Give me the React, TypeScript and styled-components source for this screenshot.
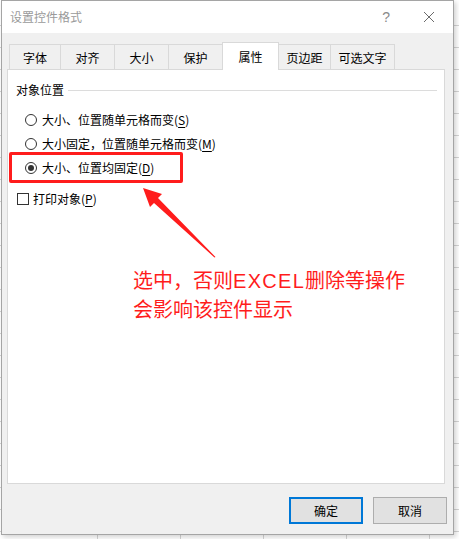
import styled, { createGlobalStyle } from "styled-components";

const GlobalStyle = createGlobalStyle`
  html, body {
    margin: 0;
    padding: 0;
    width: 459px;
    height: 539px;
    overflow: hidden;
  }
  body {
    font-family: "Noto Sans CJK SC", "Noto Sans", sans-serif;
    font-size: 12px;
    color: #000;
  }
`;

const tabs = [
  { label: "字体", width: 52 },
  { label: "对齐", width: 55 },
  { label: "大小", width: 55 },
  { label: "保护", width: 55 },
  { label: "属性", width: 57 },
  { label: "页边距", width: 53 },
  { label: "可选文字", width: 65 },
];

const radios = [
  { text: "大小、位置随单元格而变", key: "S", checked: false },
  { text: "大小固定，位置随单元格而变", key: "M", checked: false },
  { text: "大小、位置均固定", key: "D", checked: true },
];

const App = () => {
  return (
    <Page>
      <GlobalStyle />
      <Dialog>
        <TitleBar>
          <Title>设置控件格式</Title>
          <TitleButtons>
            <Help>?</Help>
            <CloseIcon width="12" height="12" viewBox="0 0 12 12">
              <path d="M1 1 L11 11 M11 1 L1 11" stroke="#6b6b6b" strokeWidth="1" fill="none" />
            </CloseIcon>
          </TitleButtons>
        </TitleBar>
        <Body>
          <TabRow>
            {tabs.map((t) => (
              <Tab key={t.label} $active={t.label === "属性"} style={{ width: t.width }}>
                {t.label}
              </Tab>
            ))}
          </TabRow>
          <Panel>
            <SectionHeader>
              <span>对象位置</span>
              <Rule />
            </SectionHeader>
            <RadioGroup>
              {radios.map((r) => (
                <OptionRow key={r.key}>
                  <RadioCircle $checked={r.checked} />
                  <span>
                    {r.text}(<u>{r.key}</u>)
                  </span>
                </OptionRow>
              ))}
            </RadioGroup>
            <CheckRow>
              <CheckBox />
              <span>
                打印对象(<u>P</u>)
              </span>
            </CheckRow>
          </Panel>
          <Footer>
            <Button $primary>确定</Button>
            <Button>取消</Button>
          </Footer>
        </Body>
      </Dialog>

      <Highlight />
      <ArrowLayer width="459" height="539" viewBox="0 0 459 539">
        <polygon
          points="143,188 162,194 158,198 215.5,257 214.5,257.5 154,203 150,207"
          fill="#ff1c1c"
        />
      </ArrowLayer>
      <Note>
        选中，否则<Latin>EXCEL</Latin>删除等操作
        <br />
        会影响该控件显示
      </Note>
    </Page>
  );
};

export default App;

const Page = styled.div`
  position: relative;
  width: 459px;
  height: 539px;
  background-color: #fff;
  background-image:
    repeating-linear-gradient(to bottom, transparent 0, transparent 21px, #d4d4d4 21px, #d4d4d4 22px),
    repeating-linear-gradient(to right, transparent 0, transparent 82px, #d4d4d4 82px, #d4d4d4 83px);
  background-position: 0 4px, 15px 0;
  overflow: hidden;
`;

const Dialog = styled.div`
  margin-left: 1px;
  width: 453px;
  height: 535px;
  box-sizing: border-box;
  border: 1px solid #a5a5a5;
  background: #f0f0f0;
  display: flex;
  flex-direction: column;
  box-shadow: 2px 2px 5px rgba(0, 0, 0, 0.18);
`;

const TitleBar = styled.div`
  height: 32px;
  flex: none;
  background: #fff;
  display: flex;
  align-items: center;
  justify-content: space-between;
  padding: 0 18px 0 8px;
`;

const Title = styled.div`
  color: #9a9a9a;
  font-size: 12px;
  line-height: 16px;
`;

const TitleButtons = styled.div`
  display: flex;
  align-items: center;
  gap: 33px;
`;

const Help = styled.span`
  color: #8a8a8a;
  font-family: "Liberation Sans", sans-serif;
  font-size: 14px;
  line-height: 16px;
`;

const CloseIcon = styled.svg`
  display: block;
`;

const Body = styled.div`
  flex: 1;
  display: flex;
  flex-direction: column;
  padding: 9px 7px 0 5px;
`;

const TabRow = styled.div`
  display: flex;
  align-items: flex-end;
  height: 27px;
  padding-left: 2px;
`;

const Tab = styled.div<{ $active?: boolean }>`
  box-sizing: border-box;
  height: ${(p) => (p.$active ? "28px" : "25px")};
  margin-bottom: ${(p) => (p.$active ? "-1px" : "0")};
  margin-left: -1px;
  border: 1px solid #d9d9d9;
  border-bottom: none;
  background: ${(p) => (p.$active ? "#fff" : "#f0f0f0")};
  position: relative;
  z-index: ${(p) => (p.$active ? 1 : 0)};
  display: flex;
  align-items: center;
  justify-content: center;
  padding-top: ${(p) => (p.$active ? "0" : "2px")};
  font-size: 12px;
  line-height: 16px;
  &:first-child {
    margin-left: 0;
  }
`;

const Panel = styled.div`
  box-sizing: border-box;
  width: 438px;
  height: 415px;
  flex: none;
  background: #fff;
  border: 1px solid #d9d9d9;
  padding: 11px 7px 0 8px;
`;

const SectionHeader = styled.div`
  display: flex;
  align-items: center;
  gap: 4px;
  height: 18px;
  line-height: 16px;
`;

const Rule = styled.div`
  flex: 1;
  height: 1px;
  background: #dcdcdc;
`;

const RadioGroup = styled.div`
  margin-top: 9px;
  padding-left: 9px;
  display: flex;
  flex-direction: column;
`;

const OptionRow = styled.label`
  display: flex;
  align-items: center;
  gap: 5px;
  height: 24px;
  line-height: 16px;

  u {
    text-decoration-thickness: 1px;
    text-underline-offset: 2px;
  }
`;

const RadioCircle = styled.span<{ $checked?: boolean }>`
  box-sizing: border-box;
  width: 12px;
  height: 12px;
  border-radius: 50%;
  border: 1px solid #333;
  display: flex;
  align-items: center;
  justify-content: center;
  &::after {
    content: "";
    width: 6px;
    height: 6px;
    border-radius: 50%;
    background: ${(p) => (p.$checked ? "#333" : "transparent")};
  }
`;

const CheckRow = styled(OptionRow)`
  margin-top: 7px;
  padding-left: 1px;
  gap: 4px;
`;

const CheckBox = styled.span`
  box-sizing: border-box;
  width: 12px;
  height: 12px;
  border: 1px solid #333;
  background: #fff;
`;

const Footer = styled.div`
  display: flex;
  justify-content: flex-end;
  gap: 10px;
  padding-top: 13px;
  margin-right: -1px;
`;

const Button = styled.div<{ $primary?: boolean }>`
  box-sizing: border-box;
  width: 74px;
  height: 27px;
  background: #e1e1e1;
  border: ${(p) => (p.$primary ? "2px solid #0078d7" : "1px solid #adadad")};
  display: flex;
  align-items: center;
  justify-content: center;
  font-size: 12px;
  line-height: 16px;
`;

const Highlight = styled.div`
  position: absolute;
  left: 9px;
  top: 152px;
  width: 174px;
  height: 31px;
  box-sizing: border-box;
  border: 3px solid #ff1c1c;
  border-radius: 2px;
`;

const ArrowLayer = styled.svg`
  position: absolute;
  left: 0;
  top: 0;
  pointer-events: none;
`;

const Note = styled.div`
  position: absolute;
  left: 133px;
  top: 266px;
  color: #ff1c1c;
  font-size: 20px;
  line-height: 28px;
  white-space: nowrap;
`;

const Latin = styled.span`
  font-family: "Liberation Sans", sans-serif;
  letter-spacing: 1.3px;
`;
